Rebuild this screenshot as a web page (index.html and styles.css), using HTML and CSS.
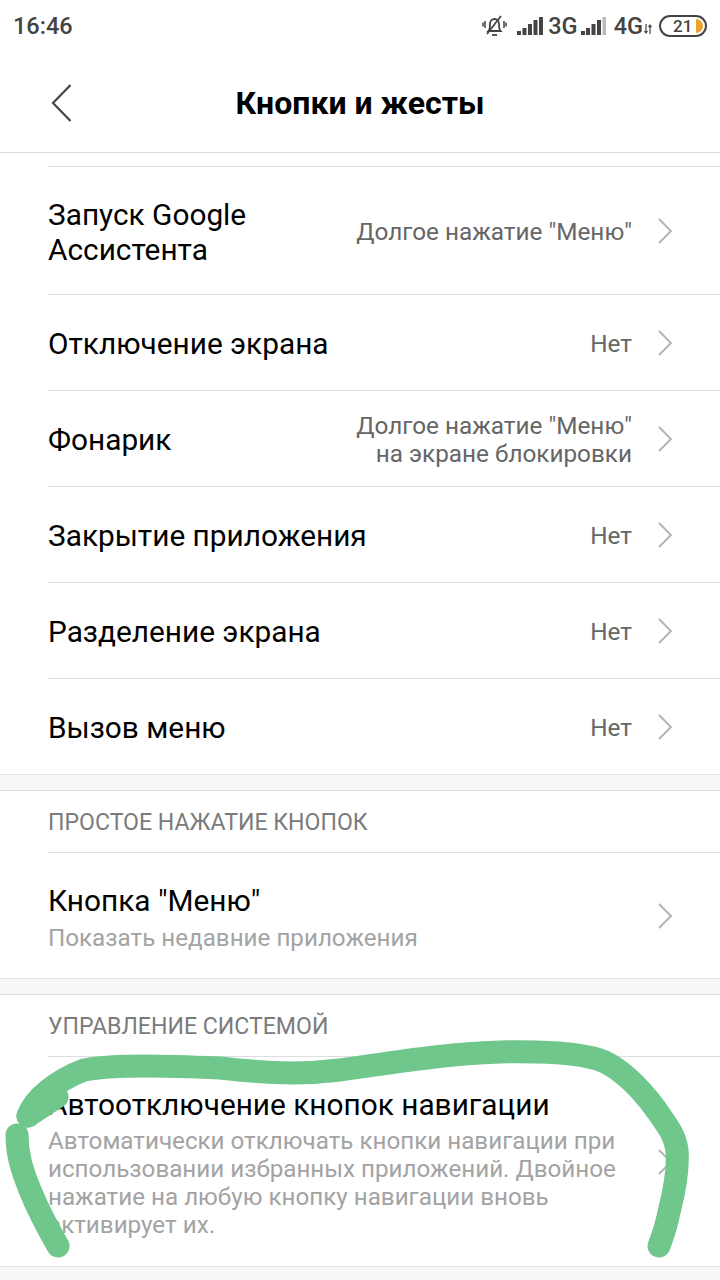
FILE: index.html
```html
<!DOCTYPE html>
<html lang="ru">
<head>
<meta charset="utf-8">
<title>Кнопки и жесты</title>
<link rel="stylesheet" href="styles.css">
</head>
<body>
<div class="screen">
  <div class="status">
    <span class="time">16:46</span>
    <div class="status-icons">
      <svg class="bell" width="25" height="22" viewBox="0 0 25 22" fill="none" stroke="#444" stroke-width="1.800"><path d="M6.500 16c1.500-1.500 1.500-3.500 1.500-7 0-3 2-5 4.500-5s4.500 2 4.500 5c0 3.500 0 5.500 1.500 7z"/><path d="M10 20h5"/><path d="M5 19L19 1"/><path d="M3 6v7M1 7.500v4M22 6v7M24 7.500v4" stroke-width="1.500"/></svg>
      <svg class="signal" width="27" height="20" viewBox="0 0 27 20" fill="#444"><rect x="0" y="15" width="4" height="4"/><rect x="5.500" y="12" width="4" height="7"/><rect x="11" y="8" width="4" height="11"/><rect x="16.500" y="4" width="4" height="15"/><rect x="22" y="1" width="4" height="18"/></svg>
      <span class="net">3G</span>
      <svg class="signal signal-2" width="26" height="20" viewBox="0 0 26 20" fill="#444"><rect x="0" y="15" width="4" height="4"/><rect x="5" y="12" width="4" height="7"/><rect x="10.500" y="8" width="4" height="11"/><rect x="16" y="4" width="4" height="15"/><rect x="21.500" y="1" width="3.500" height="18" fill="#bbb"/></svg>
      <span class="net net-2">4G</span>
      <svg class="arrows" width="8" height="12" viewBox="0 0 8 12" fill="none" stroke="#555" stroke-width="1.300"><path d="M2 1v9M0.500 8l1.500 2 1.500-2M6 11V2M4.500 4L6 2l1.500 2"/></svg>
      <div class="battery"><span class="battery-num">21</span><span class="battery-fill"></span></div>
    </div>
  </div>
  <header class="topbar">
    <svg class="back" width="24" height="38" viewBox="0 0 24 38" fill="none" stroke="#444" stroke-width="2.200"><path d="M20.500 1L3 19l17.500 18"/></svg>
    <h1 class="title">Кнопки и жесты</h1>
  </header>

  <section class="group group-first">
    <div class="row row-tall">
      <div class="label">Запуск Google<br>Ассистента</div>
      <div class="value">Долгое нажатие "Меню"</div>
      <svg class="chev" width="16" height="26" viewBox="0 0 16 26" fill="none" stroke="#b5b5b5" stroke-width="2"><path d="M2 1l12 12L2 25"/></svg>
    </div>
    <div class="row">
      <div class="label">Отключение экрана</div>
      <div class="value">Нет</div>
      <svg class="chev" width="16" height="26" viewBox="0 0 16 26" fill="none" stroke="#b5b5b5" stroke-width="2"><path d="M2 1l12 12L2 25"/></svg>
    </div>
    <div class="row">
      <div class="label">Фонарик</div>
      <div class="value">Долгое нажатие "Меню"<br>на экране блокировки</div>
      <svg class="chev" width="16" height="26" viewBox="0 0 16 26" fill="none" stroke="#b5b5b5" stroke-width="2"><path d="M2 1l12 12L2 25"/></svg>
    </div>
    <div class="row">
      <div class="label">Закрытие приложения</div>
      <div class="value">Нет</div>
      <svg class="chev" width="16" height="26" viewBox="0 0 16 26" fill="none" stroke="#b5b5b5" stroke-width="2"><path d="M2 1l12 12L2 25"/></svg>
    </div>
    <div class="row">
      <div class="label">Разделение экрана</div>
      <div class="value">Нет</div>
      <svg class="chev" width="16" height="26" viewBox="0 0 16 26" fill="none" stroke="#b5b5b5" stroke-width="2"><path d="M2 1l12 12L2 25"/></svg>
    </div>
    <div class="row">
      <div class="label">Вызов меню</div>
      <div class="value">Нет</div>
      <svg class="chev" width="16" height="26" viewBox="0 0 16 26" fill="none" stroke="#b5b5b5" stroke-width="2"><path d="M2 1l12 12L2 25"/></svg>
    </div>
  </section>

  <div class="gap"></div>

  <section class="group">
    <div class="section-head">ПРОСТОЕ НАЖАТИЕ КНОПОК</div>
    <div class="row row-menu">
      <div class="label-block">
        <div class="label">Кнопка "Меню"</div>
        <div class="sub">Показать недавние приложения</div>
      </div>
      <svg class="chev" width="16" height="26" viewBox="0 0 16 26" fill="none" stroke="#b5b5b5" stroke-width="2"><path d="M2 1l12 12L2 25"/></svg>
    </div>
  </section>

  <div class="gap"></div>

  <section class="group">
    <div class="section-head">УПРАВЛЕНИЕ СИСТЕМОЙ</div>
    <div class="row row-auto">
      <div class="label-block">
        <div class="label">Автоотключение кнопок навигации</div>
        <div class="sub sub-long">Автоматически отключать кнопки навигации при использовании избранных приложений. Двойное нажатие на любую кнопку навигации вновь активирует их.</div>
      </div>
      <svg class="chev" width="16" height="26" viewBox="0 0 16 26" fill="none" stroke="#b5b5b5" stroke-width="2"><path d="M2 1l12 12L2 25"/></svg>
    </div>
  </section>
  <div class="gap gap-end"></div>

  <svg class="scribble" width="720" height="1280" viewBox="0 0 720 1280" fill="none" stroke="#6fc78b" stroke-width="23" stroke-linecap="round" stroke-linejoin="round">
    <path d="M58 1246C50 1232 38 1210 30 1190C22 1170 17 1155 17 1135"/>
    <path d="M57 1097L28 1116"/>
    <path d="M28 1116C34 1098 58 1080 84 1070C115 1064 170 1066 220 1068C265 1073 300 1075 340 1070C385 1064 440 1054 500 1052C545 1051 585 1053 605 1062C625 1072 640 1088 655 1108C667 1125 675 1135 677 1150C679 1175 672 1200 669 1212C666 1228 662 1238 659 1246"/>
  </svg>
</div>
</body>
</html>
```

FILE: styles.css
```css
* { box-sizing: border-box; }
html, body { margin: 0; padding: 0; background: #fff; }
.screen {
  position: relative;
  width: 720px;
  height: 1280px;
  overflow: hidden;
  font-family: Roboto, "Noto Sans", sans-serif;
  color: #000;
  background: #fff;
}
.status {
  height: 52px;
  display: flex;
  align-items: center;
  justify-content: space-between;
  padding: 0 13px;
}
.time { font-size: 23.500px; font-weight: 500; color: #444; }
.status-icons { display: flex; align-items: center; }
.bell { margin-right: 10px; }
.signal { margin-right: 4px; }
.signal-2 { margin-right: 7px; }
.net { font-size: 23.500px; font-weight: 500; color: #444; margin-right: 3px; }
.net-2 { margin-right: 1px; }
.arrows { margin-right: 7px; margin-top: 6px; }
.battery {
  position: relative;
  width: 48px;
  height: 22px;
  border: 2px solid #444;
  border-radius: 11px;
  display: flex;
  align-items: center;
  padding-left: 12px;
  overflow: hidden;
}
.battery-num { font-size: 17px; font-weight: 500; color: #444; line-height: 18px; }
.battery-fill {
  position: absolute;
  right: 2px;
  top: 2px;
  width: 7px;
  height: 14px;
  background: #eba22d;
  border-radius: 0 7px 7px 0;
}
.topbar {
  position: relative;
  height: 101px;
  display: flex;
  align-items: center;
  justify-content: center;
  border-bottom: 1px solid #dcdcdc;
}
.back { position: absolute; left: 50px; top: 32px; }
.title { margin: 2px 0 0; font-size: 32px; font-weight: 700; line-height: 36px; }
.group { padding-left: 48px; border-top: 1px solid #dedede; }
.group-first { margin-top: 13px; border-top: 0; }
.group-first .row:first-child { border-top: 1px solid #dedede; }
.row {
  display: flex;
  align-items: center;
  height: 96px;
  padding-right: 47px;
  border-bottom: 1px solid #dedede;
}
.group-first .row:last-child { height: 95px; border-bottom: 0; }
.group-first .row.row-tall { height: 129px; }
.label { font-size: 29.800px; line-height: 35px; color: #000; flex: 1; padding-top: 1px; }
.row-tall .label { padding-top: 3px; }
.value { font-size: 24.300px; line-height: 28px; color: #666; text-align: right; margin-right: 25px; padding-top: 2px; }
.chev { flex: none; }
.section-head {
  height: 62px;
  display: flex;
  align-items: center;
  padding-top: 2px;
  font-size: 23.100px;
  color: #7b7b7b;
  border-bottom: 1px solid #dedede;
}
.label-block { flex: 1; min-width: 0; }
.sub { font-size: 24.200px; line-height: 28px; color: #a3a3a3; }
.row-menu { height: 125px; border-bottom: 0; }
.row-menu .label-block { padding-top: 3px; }
.row-menu .label { line-height: 36px; margin-bottom: 5px; padding-top: 0; }
.row-auto { height: 209px; border-bottom: 0; }
.row-auto .label-block { padding-top: 4px; }
.row-auto .label { line-height: 34px; margin-bottom: 5px; padding-top: 0; }
.sub-long { width: 590px; }
.gap {
  height: 16px;
  background: #f7f7f7;
  border-top: 1px solid #e2e2e2;
}
.gap-end { height: 14px; }
.scribble { position: absolute; left: 0; top: 0; pointer-events: none; }
```
